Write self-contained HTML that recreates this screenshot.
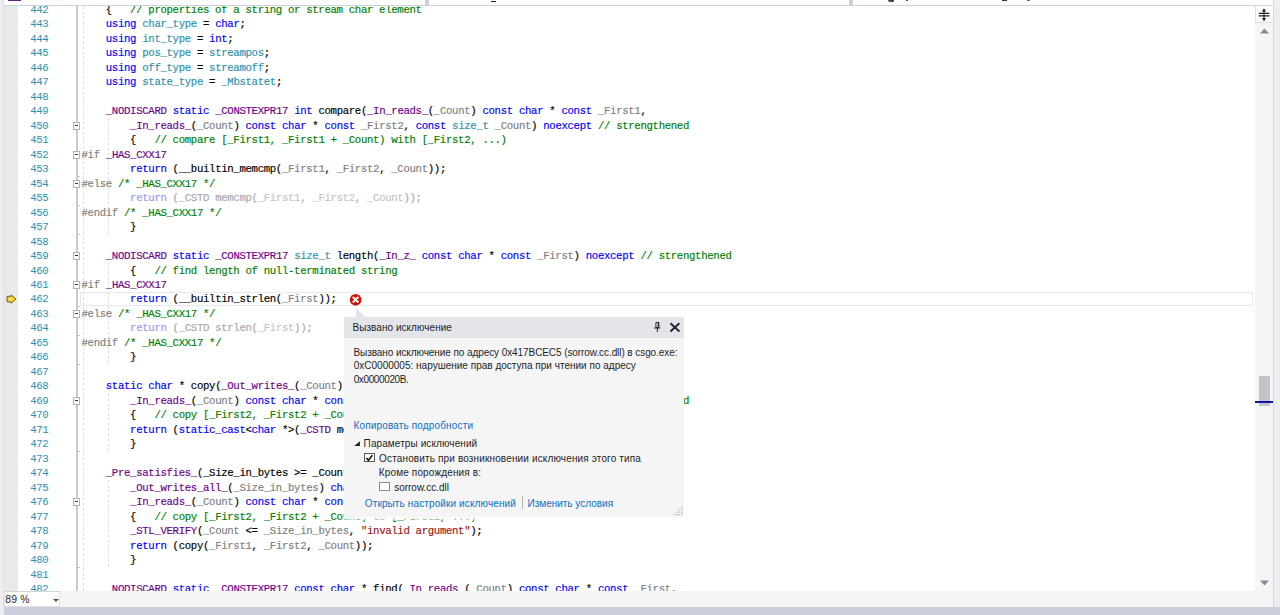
<!DOCTYPE html>
<html><head><meta charset="utf-8">
<style>
html,body{margin:0;padding:0;}
body{width:1280px;height:615px;overflow:hidden;background:#fff;position:relative;font-family:"Liberation Sans",sans-serif;}
#root{position:absolute;left:0;top:0;width:1280px;height:615px;overflow:hidden;background:#fff;}
.abs{position:absolute;}
/* editor text */
.ln,.cl{position:absolute;height:14.476px;line-height:14.476px;font-family:"Liberation Mono",monospace;font-size:10.7px;letter-spacing:-0.34px;white-space:pre;}
.cl{-webkit-text-stroke:0.16px currentColor;}
.ln{left:30.2px;color:#2b91af;}
.cl{left:81.5px;color:#000;}
.k{color:#0000ff}.t{color:#2b91af}.m{color:#6f008a}.p{color:#808080}.c{color:#008000}.s{color:#a31515}.g{color:#808080}
.ik{color:#9a9af6}.ig{color:#a8a8a8}.ip{color:#c4c4c4}
.fold{position:absolute;left:72.5px;width:7px;height:7px;border:1px solid #b4b4b4;background:#fff;box-sizing:border-box;width:7.6px;height:8px;}
.fold i{position:absolute;left:1px;top:2.4px;width:3.6px;height:1px;background:#333;}
.tick{position:absolute;left:77px;width:3px;height:1px;background:#c6c6c6;}
.guide{position:absolute;width:0;border-left:1px dashed #dedede;}
/* popup */
#pop{position:absolute;left:344.1px;top:316.8px;width:339.8px;height:200.3px;background:#f5f5f5;font-size:10px;color:#1e1e1e;}
#pop .ttl{position:absolute;left:0;top:0;width:340px;height:21px;background:#e4e5ea;}
#pop .tx{position:absolute;white-space:pre;line-height:14px;height:14px;}
#pop .lk{color:#0e70c0;}
.cb{position:absolute;width:10px;height:9.6px;box-sizing:border-box;border:1px solid #707070;background:#fff;}
</style></head><body><div id="root">

<!-- top strip -->
<div class="abs" style="left:0;top:0;width:1280px;height:6px;background:#fff;z-index:5"></div>
<div class="abs" style="left:0;top:4.5px;width:1280px;height:1.5px;background:#cfd1dd;z-index:6"></div>
<div class="abs" style="left:425px;top:0;width:4px;height:5px;background:#cccedb;z-index:6"></div>
<div class="abs" style="left:848.5px;top:0;width:4px;height:5px;background:#cccedb;z-index:6"></div>
<div class="abs" style="left:888px;top:0;width:6px;height:1.6px;background:#444;z-index:6;border-radius:0 0 2px 3px"></div>
<div class="abs" style="left:905.8px;top:0;width:2.6px;height:1.3px;background:#555;z-index:6"></div>
<div class="abs" style="left:1001.8px;top:0.4px;width:5.4px;height:1.1px;background:#333;z-index:6"></div>
<div class="abs" style="left:1027px;top:0;width:2.6px;height:1px;background:#666;z-index:6"></div>
<div class="abs" style="left:8px;top:0;width:12.6px;height:0.7px;background:#68217a;z-index:6"></div>
<div class="abs" style="left:491px;top:1px;width:5.2px;height:1.2px;background:#222;z-index:6"></div>

<!-- left margins -->
<div class="abs" style="left:0;top:0;width:4px;height:615px;background:#eeeef2;z-index:7"></div>
<div class="abs" style="left:3.2px;top:0;width:1px;height:607px;background:#dfe0e7;z-index:7"></div>
<div class="abs" style="left:4px;top:6px;width:14px;height:585px;background:#e8e9ea;"></div>

<!-- outlining line and guides -->
<div class="abs" style="left:75.9px;top:6px;width:1.8px;height:585px;background:#cbcbcb;"></div>
<div class="guide" style="left:83px;top:6px;height:585px;"></div>
<div class="guide" style="left:108px;top:118px;height:116px;"></div>
<div class="guide" style="left:108px;top:262px;height:102px;"></div>
<div class="guide" style="left:108px;top:393px;height:58px;"></div>
<div class="guide" style="left:108px;top:480px;height:87px;"></div>

<!-- current line -->
<div class="abs" style="left:80px;top:292.2px;width:1172.5px;height:14.2px;border:1px solid #e7e7ec;box-sizing:border-box;"></div>

<div class="ln" style="top:2.97px">442</div><div class="cl" style="top:2.97px">    {   <span class="c">// properties of a string or stream char element</span></div>
<div class="ln" style="top:17.45px">443</div><div class="cl" style="top:17.45px">    <span class="k">using</span> <span class="t">char_type</span> = <span class="k">char</span>;</div>
<div class="ln" style="top:31.92px">444</div><div class="cl" style="top:31.92px">    <span class="k">using</span> <span class="t">int_type</span> = <span class="k">int</span>;</div>
<div class="ln" style="top:46.40px">445</div><div class="cl" style="top:46.40px">    <span class="k">using</span> <span class="t">pos_type</span> = <span class="t">streampos</span>;</div>
<div class="ln" style="top:60.87px">446</div><div class="cl" style="top:60.87px">    <span class="k">using</span> <span class="t">off_type</span> = <span class="t">streamoff</span>;</div>
<div class="ln" style="top:75.35px">447</div><div class="cl" style="top:75.35px">    <span class="k">using</span> <span class="t">state_type</span> = <span class="t">_Mbstatet</span>;</div>
<div class="ln" style="top:89.83px">448</div><div class="cl" style="top:89.83px"></div>
<div class="ln" style="top:104.30px">449</div><div class="cl" style="top:104.30px">    <span class="m">_NODISCARD</span> <span class="k">static</span> <span class="m">_CONSTEXPR17</span> <span class="k">int</span> compare(<span class="m">_In_reads_</span>(<span class="p">_Count</span>) <span class="k">const</span> <span class="k">char</span> * <span class="k">const</span> <span class="p">_First1</span>,</div>
<div class="ln" style="top:118.78px">450</div><div class="cl" style="top:118.78px">        <span class="m">_In_reads_</span>(<span class="p">_Count</span>) <span class="k">const</span> <span class="k">char</span> * <span class="k">const</span> <span class="p">_First2</span>, <span class="k">const</span> <span class="t">size_t</span> <span class="p">_Count</span>) <span class="k">noexcept</span> <span class="c">// strengthened</span></div>
<div class="ln" style="top:133.25px">451</div><div class="cl" style="top:133.25px">        {   <span class="c">// compare [_First1, _First1 + _Count) with [_First2, ...)</span></div>
<div class="ln" style="top:147.73px">452</div><div class="cl" style="top:147.73px"><span class="g">#if</span> <span class="m">_HAS_CXX17</span></div>
<div class="ln" style="top:162.21px">453</div><div class="cl" style="top:162.21px">        <span class="k">return</span> (__builtin_memcmp(<span class="p">_First1</span>, <span class="p">_First2</span>, <span class="p">_Count</span>));</div>
<div class="ln" style="top:176.68px">454</div><div class="cl" style="top:176.68px"><span class="g">#else</span> <span class="c">/* _HAS_CXX17 */</span></div>
<div class="ln" style="top:191.16px">455</div><div class="cl" style="top:191.16px">        <span class="ik">return</span><span class="ig"> (_CSTD memcmp(</span><span class="ip">_First1</span><span class="ig">, </span><span class="ip">_First2</span><span class="ig">, </span><span class="ip">_Count</span><span class="ig">));</span></div>
<div class="ln" style="top:205.63px">456</div><div class="cl" style="top:205.63px"><span class="g">#endif</span> <span class="c">/* _HAS_CXX17 */</span></div>
<div class="ln" style="top:220.11px">457</div><div class="cl" style="top:220.11px">        }</div>
<div class="ln" style="top:234.59px">458</div><div class="cl" style="top:234.59px"></div>
<div class="ln" style="top:249.06px">459</div><div class="cl" style="top:249.06px">    <span class="m">_NODISCARD</span> <span class="k">static</span> <span class="m">_CONSTEXPR17</span> <span class="t">size_t</span> length(<span class="m">_In_z_</span> <span class="k">const</span> <span class="k">char</span> * <span class="k">const</span> <span class="p">_First</span>) <span class="k">noexcept</span> <span class="c">// strengthened</span></div>
<div class="ln" style="top:263.54px">460</div><div class="cl" style="top:263.54px">        {   <span class="c">// find length of null-terminated string</span></div>
<div class="ln" style="top:278.01px">461</div><div class="cl" style="top:278.01px"><span class="g">#if</span> <span class="m">_HAS_CXX17</span></div>
<div class="ln" style="top:292.49px">462</div><div class="cl" style="top:292.49px">        <span class="k">return</span> (__builtin_strlen(<span class="p">_First</span>));</div>
<div class="ln" style="top:306.97px">463</div><div class="cl" style="top:306.97px"><span class="g">#else</span> <span class="c">/* _HAS_CXX17 */</span></div>
<div class="ln" style="top:321.44px">464</div><div class="cl" style="top:321.44px">        <span class="ik">return</span><span class="ig"> (_CSTD strlen(</span><span class="ip">_First</span><span class="ig">));</span></div>
<div class="ln" style="top:335.92px">465</div><div class="cl" style="top:335.92px"><span class="g">#endif</span> <span class="c">/* _HAS_CXX17 */</span></div>
<div class="ln" style="top:350.39px">466</div><div class="cl" style="top:350.39px">        }</div>
<div class="ln" style="top:364.87px">467</div><div class="cl" style="top:364.87px"></div>
<div class="ln" style="top:379.35px">468</div><div class="cl" style="top:379.35px">    <span class="k">static</span> <span class="k">char</span> * copy(<span class="m">_Out_writes_</span>(<span class="p">_Count</span>) <span class="k">char</span> * <span class="k">const</span> <span class="p">_First1</span>,</div>
<div class="ln" style="top:393.82px">469</div><div class="cl" style="top:393.82px">        <span class="m">_In_reads_</span>(<span class="p">_Count</span>) <span class="k">const</span> <span class="k">char</span> * <span class="k">const</span> <span class="p">_First2</span>, <span class="k">const</span> <span class="t">size_t</span> <span class="p">_Count</span>) <span class="k">noexcept</span> <span class="c">// strengthened</span></div>
<div class="ln" style="top:408.30px">470</div><div class="cl" style="top:408.30px">        {   <span class="c">// copy [_First2, _First2 + _Count) to [_First1, ...)</span></div>
<div class="ln" style="top:422.77px">471</div><div class="cl" style="top:422.77px">        <span class="k">return</span> (<span class="k">static_cast</span>&lt;<span class="k">char</span> *&gt;(<span class="m">_CSTD</span> memcpy(<span class="p">_First1</span>, <span class="p">_First2</span>, <span class="p">_Count</span>)));</div>
<div class="ln" style="top:437.25px">472</div><div class="cl" style="top:437.25px">        }</div>
<div class="ln" style="top:451.73px">473</div><div class="cl" style="top:451.73px"></div>
<div class="ln" style="top:466.20px">474</div><div class="cl" style="top:466.20px">    <span class="m">_Pre_satisfies_</span>(_Size_in_bytes &gt;= _Count) <span class="k">static</span> <span class="k">char</span> * _Copy_s(</div>
<div class="ln" style="top:480.68px">475</div><div class="cl" style="top:480.68px">        <span class="m">_Out_writes_all_</span>(<span class="p">_Size_in_bytes</span>) <span class="k">char</span> * <span class="k">const</span> <span class="p">_First1</span>, <span class="k">const</span> <span class="t">size_t</span> <span class="p">_Size_in_bytes</span>,</div>
<div class="ln" style="top:495.15px">476</div><div class="cl" style="top:495.15px">        <span class="m">_In_reads_</span>(<span class="p">_Count</span>) <span class="k">const</span> <span class="k">char</span> * <span class="k">const</span> <span class="p">_First2</span>, <span class="k">const</span> <span class="t">size_t</span> <span class="p">_Count</span>) <span class="k">noexcept</span></div>
<div class="ln" style="top:509.63px">477</div><div class="cl" style="top:509.63px">        {   <span class="c">// copy [_First2, _First2 + _Count) to [_First1, ...)</span></div>
<div class="ln" style="top:524.11px">478</div><div class="cl" style="top:524.11px">        <span class="m">_STL_VERIFY</span>(<span class="p">_Count</span> &lt;= <span class="p">_Size_in_bytes</span>, <span class="s">"invalid argument"</span>);</div>
<div class="ln" style="top:538.58px">479</div><div class="cl" style="top:538.58px">        <span class="k">return</span> (copy(<span class="p">_First1</span>, <span class="p">_First2</span>, <span class="p">_Count</span>));</div>
<div class="ln" style="top:553.06px">480</div><div class="cl" style="top:553.06px">        }</div>
<div class="ln" style="top:567.53px">481</div><div class="cl" style="top:567.53px"></div>
<div class="ln" style="top:582.01px">482</div><div class="cl" style="top:582.01px">    <span class="m">_NODISCARD</span> <span class="k">static</span> <span class="m">_CONSTEXPR17</span> <span class="k">const</span> <span class="k">char</span> * find(<span class="m">_In_reads_</span>(<span class="p">_Count</span>) <span class="k">const</span> <span class="k">char</span> * <span class="k">const</span> <span class="p">_First</span>,</div>
<div class="fold" style="top:122.0px"><i></i></div><div class="fold" style="top:151.0px"><i></i></div><div class="fold" style="top:180.0px"><i></i></div><div class="fold" style="top:252.0px"><i></i></div><div class="fold" style="top:281.0px"><i></i></div><div class="fold" style="top:310.0px"><i></i></div><div class="fold" style="top:397.0px"><i></i></div><div class="fold" style="top:498.0px"><i></i></div>
<div class="tick" style="top:176px"></div><div class="tick" style="top:205px"></div><div class="tick" style="top:234px"></div><div class="tick" style="top:306px"></div><div class="tick" style="top:335px"></div><div class="tick" style="top:364px"></div><div class="tick" style="top:451px"></div><div class="tick" style="top:567px"></div>

<!-- instruction pointer arrow -->
<svg class="abs" style="left:6px;top:293.7px" width="11" height="11" viewBox="0 0 11 11"><defs><radialGradient id="ag" cx="0.5" cy="0.5" r="0.6"><stop offset="0" stop-color="#ffe65a"/><stop offset="1" stop-color="#edc21a"/></radialGradient></defs><path d="M1.1 2.3 H5.2 V1 L9.9 5.1 L5.2 9.2 V7.9 H1.1 Z" fill="url(#ag)" stroke="#6e5c14" stroke-width="1" stroke-linejoin="round"/></svg>

<!-- error icon -->
<svg class="abs" style="left:349px;top:293px" width="13" height="13" viewBox="0 0 13 13"><circle cx="6.6" cy="6.7" r="5.8" fill="#d8160d"/><path d="M6.6 12.5A5.8 5.8 0 0 0 12.4 6.7H0.8A5.8 5.8 0 0 0 6.6 12.5Z" fill="#b8120a" opacity=".55"/><path d="M3.8 3.9 L9.4 9.5 M9.4 3.9 L3.8 9.5" stroke="#fff" stroke-width="2" stroke-linecap="butt"/></svg>

<!-- right scrollbar -->
<div class="abs" style="left:1255px;top:6px;width:18px;height:601px;background:#f5f5f5;"></div>
<div class="abs" style="left:1255px;top:6px;width:18px;height:16.5px;background:#fcfcfc;border-left:1px solid #e0e0e0;border-bottom:1px solid #dcdcdc;box-sizing:border-box;"></div>
<svg class="abs" style="left:1258px;top:8.3px" width="12" height="14" viewBox="0 0 12 14"><path d="M0.8 5.4H11.4M0.8 7.9H11.4" stroke="#1e1e1e" stroke-width="1.3"/><path d="M6 1V13" stroke="#1e1e1e" stroke-width="1"/><path d="M3.9 3.4L6 0.6L8.1 3.4ZM3.9 10L6 12.8L8.1 10Z" fill="#1e1e1e"/></svg>
<svg class="abs" style="left:1260px;top:28px" width="9" height="6" viewBox="0 0 9 6"><path d="M0 5.5L4.5 0.5L9 5.5Z" fill="#868999"/></svg>
<svg class="abs" style="left:1260px;top:580px" width="9" height="6" viewBox="0 0 9 6"><path d="M0 0.5L4.5 5.5L9 0.5Z" fill="#868999"/></svg>
<div class="abs" style="left:1259px;top:376px;width:10.6px;height:29.6px;background:#c2c3c9;"></div>
<div class="abs" style="left:1255px;top:400.6px;width:18px;height:2.4px;background:#1414a4;"></div>
<div class="abs" style="left:1273px;top:0;width:1.2px;height:607px;background:#d6d7e0;z-index:7"></div>
<div class="abs" style="left:1274px;top:0;width:6px;height:607px;background:#eeeef2;z-index:7"></div>

<!-- bottom bar -->
<div class="abs" style="left:4px;top:591px;width:1269px;height:16px;background:#f5f5f5;"></div>
<div class="abs" style="left:4.3px;top:591px;width:56px;height:15.6px;background:#fff;border:1px solid #e2e2e6;border-top-color:#d4d4d8;box-sizing:border-box;"></div>
<div class="abs" style="left:5.2px;top:593px;font-size:10.4px;letter-spacing:0.2px;line-height:14px;color:#1e1e1e;white-space:pre;">89 %</div>
<svg class="abs" style="left:52.6px;top:598.6px" width="6" height="4" viewBox="0 0 6 4"><path d="M0 0H6L3 3Z" fill="#555"/></svg>
<div class="abs" style="left:0;top:607px;width:1280px;height:8px;background:#cccedb;"></div>
<div class="abs" style="left:0;top:607px;width:4px;height:8px;background:#e0e1e8;"></div>

<!-- popup -->
<svg class="abs" style="left:355px;top:307px" width="12" height="11" viewBox="0 0 12 11"><path d="M1 0.6V11H11.4Z" fill="#e4e5ea"/></svg>
<div id="pop">
  <div class="ttl"></div>
  <div class="tx" style="left:8.4px;top:4px;letter-spacing:0.041px">Вызвано исключение</div>
  <div class="tx" style="left:9.4px;top:29px;letter-spacing:-0.08px">Вызвано исключение по адресу 0x417BCEC5 (sorrow.cc.dll) в csgo.exe:</div>
  <div class="tx" style="left:9.6px;top:42px;letter-spacing:0.009px">0xC0000005: нарушение прав доступа при чтении по адресу</div>
  <div class="tx" style="left:9.6px;top:56px;letter-spacing:-0.375px">0x0000020B.</div>
  <div class="tx lk" style="left:9.4px;top:102px;letter-spacing:0.151px">Копировать подробности</div>
  <svg class="abs" style="left:10px;top:124px" width="7" height="6" viewBox="0 0 7 6"><path d="M5.9 0.2V5H0.3Z" fill="#1e1e1e"/></svg>
  <div class="tx" style="left:19.5px;top:120px;letter-spacing:0.097px">Параметры исключений</div>
  <div class="cb" style="left:20.2px;top:136.1px;width:10.5px;height:9.4px;border-color:#5a5a5a"></div>
  <svg class="abs" style="left:21.3px;top:137px" width="9" height="8" viewBox="0 0 9 8"><path d="M1.4 3.9L3.4 6.3L7.4 1.2" stroke="#111" stroke-width="1.5" fill="none"/></svg>
  <div class="tx" style="left:35px;top:135px;letter-spacing:0.142px">Остановить при возникновении исключения этого типа</div>
  <div class="tx" style="left:34.7px;top:149px;letter-spacing:0.148px">Кроме порождения в:</div>
  <div class="cb" style="left:35.3px;top:164.9px;width:10.7px;height:9.4px;border-color:#8c8c8c"></div>
  <div class="tx" style="left:50.1px;top:164px;letter-spacing:-0.018px">sorrow.cc.dll</div>
  <div class="tx lk" style="left:20.7px;top:180px;letter-spacing:0.121px">Открыть настройки исключений</div>
  <div class="abs" style="left:178px;top:179.5px;width:1px;height:12.5px;background:#b4b4b4;"></div>
  <div class="tx lk" style="left:183.4px;top:180px;letter-spacing:-0.001px">Изменить условия</div>
  <!-- pin & close -->
  <svg class="abs" style="left:310px;top:5px" width="7" height="11" viewBox="0 0 7 11"><path d="M1.9 0.5H4.9V5.5H1.9Z" stroke="#2a2a2a" stroke-width="1" fill="none"/><path d="M4.3 0.5V5.5" stroke="#2a2a2a" stroke-width="1.2"/><path d="M0.2 6H6.2" stroke="#2a2a2a" stroke-width="1.1"/><path d="M3.3 6V10.2" stroke="#2a2a2a" stroke-width="1"/></svg>
  <svg class="abs" style="left:325px;top:5px" width="12" height="11" viewBox="0 0 12 11"><path d="M1.4 1.2L10.4 9.6M10.4 1.2L1.4 9.6" stroke="#2a2a2a" stroke-width="2"/></svg>
  <!-- grip -->
  <svg class="abs" style="left:329.8px;top:189.2px" width="10" height="10" viewBox="0 0 10 10"><g fill="#bfc1d0"><rect x="7" y="0.5" width="1.4" height="1.4"/><rect x="4.5" y="3" width="1.4" height="1.4"/><rect x="7" y="3" width="1.4" height="1.4"/><rect x="2" y="5.5" width="1.4" height="1.4"/><rect x="4.5" y="5.5" width="1.4" height="1.4"/><rect x="7" y="5.5" width="1.4" height="1.4"/><rect x="-0.5" y="8" width="1.4" height="1.4"/><rect x="2" y="8" width="1.4" height="1.4"/><rect x="4.5" y="8" width="1.4" height="1.4"/><rect x="7" y="8" width="1.4" height="1.4"/></g></svg>
</div>
<div class="abs" style="left:343px;top:517.1px;width:342px;height:4px;background:linear-gradient(rgba(255,255,255,.95),rgba(255,255,255,.7) 50%,rgba(255,255,255,0));"></div>

</div></body></html>
